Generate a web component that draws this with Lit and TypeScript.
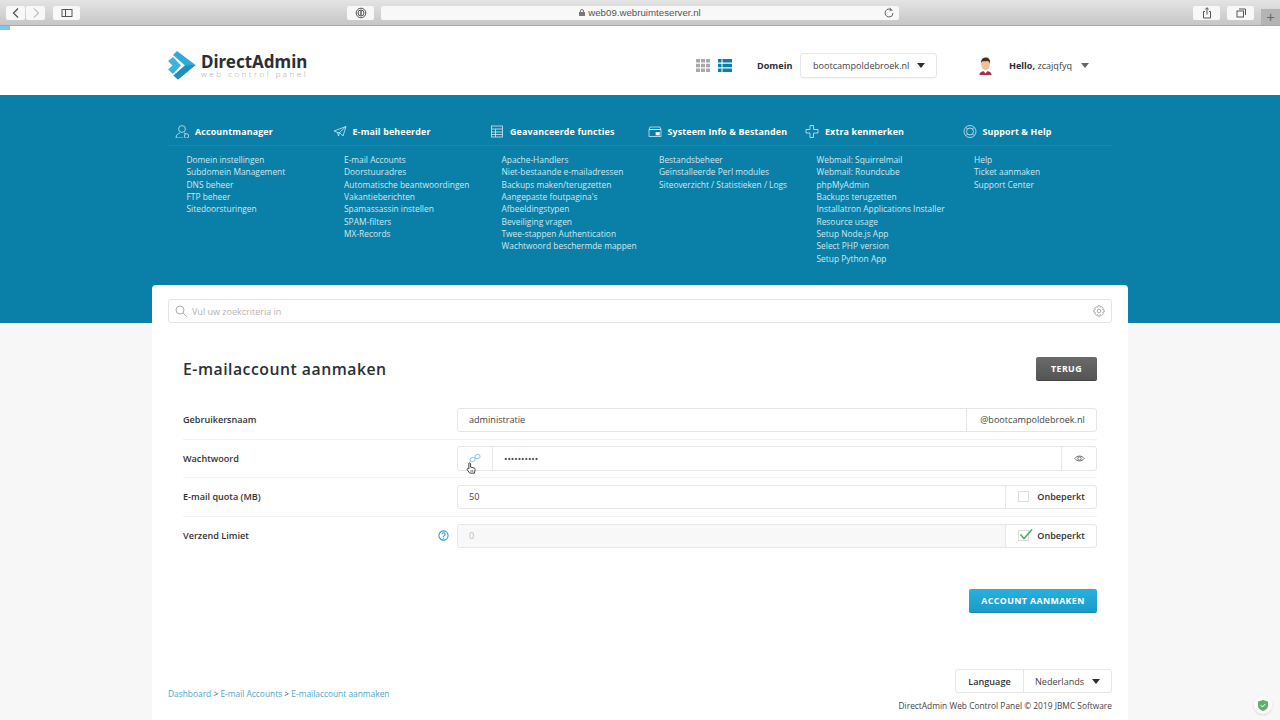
import { LitElement, html, css, svg } from "lit";
import { customElement } from "lit/decorators.js";

const menu = [
	{
		title: "Accountmanager",
		icon: svg`<circle cx="7" cy="5" r="3.4"/><path d="M1 14c0-3 2-4.600 4-5M9 9c1 .2 1.600.5 2 1M1 14h7"/><circle cx="11.500" cy="12" r="2.200"/>`,
		links: ["Domein instellingen", "Subdomein Management", "DNS beheer", "FTP beheer", "Sitedoorsturingen"],
	},
	{
		title: "E-mail beheerder",
		icon: svg`<path d="M1 7l12-4.500-3 9.500-3.500-3.500L13 2.500M6.500 8.500L5.500 12l-1-3.500zM1 7l3.500 1.500"/>`,
		links: ["E-mail Accounts", "Doorstuuradres", "Automatische beantwoordingen", "Vakantieberichten", "Spamassassin instellen", "SPAM-filters", "MX-Records"],
	},
	{
		title: "Geavanceerde functies",
		icon: svg`<rect x="1.500" y="2" width="11" height="11"/><path d="M1.500 5h11M1.500 8h11M1.500 10.500h11M5.500 5v8"/>`,
		links: ["Apache-Handlers", "Niet-bestaande e-mailadressen", "Backups maken/terugzetten", "Aangepaste foutpagina's", "Afbeeldingstypen", "Beveiliging vragen", "Twee-stappen Authentication", "Wachtwoord beschermde mappen"],
	},
	{
		title: "Systeem Info & Bestanden",
		icon: svg`<path d="M1 5.500V12.500h12V5.500zM2 3h10l1 2.500H1z"/><rect x="8" y="8.500" width="3.500" height="2.500" fill="currentColor"/>`,
		links: ["Bestandsbeheer", "Geïnstalleerde Perl modules", "Siteoverzicht / Statistieken / Logs"],
	},
	{
		title: "Extra kenmerken",
		icon: svg`<path d="M5 1.500h3.500V5.500H13v3.500H8.500v4.500H5V9H1V5.500h4z"/>`,
		links: ["Webmail: Squirrelmail", "Webmail: Roundcube", "phpMyAdmin", "Backups terugzetten", "Installatron Applications Installer", "Resource usage", "Setup Node.js App", "Select PHP version", "Setup Python App"],
	},
	{
		title: "Support & Help",
		icon: svg`<circle cx="7" cy="7.500" r="6"/><circle cx="7" cy="7.500" r="3.500"/><path d="M3 3.500l1.500 1.500M11 3.500L9.500 5M3 11.500L4.500 10M11 11.500L9.500 10"/>`,
		links: ["Help", "Ticket aanmaken", "Support Center"],
	},
];

@customElement("app-root")
export class AppRoot extends LitElement {
	static styles = css`
		:host {
			display: block;
			position: relative;
			width: 1280px;
			height: 720px;
			overflow: hidden;
			background: #f7f7f7;
			color: #333;
			font-family: "Open Sans", sans-serif;
			font-size: 9.1px;
		}

		/* browser chrome */
		.chrome {
			display: flex;
			align-items: center;
			height: 25px;
			box-sizing: content-box;
			background: linear-gradient(#e4e4e4, #c6c6c6);
			border-bottom: 1px solid #a8a8a8;
			padding-left: 6px;
		}

		.cbtn {
			display: flex;
			align-items: center;
			justify-content: center;
			height: 14px;
			width: 27px;
			background: #f8f8f8;
			border-radius: 2px;
			color: #555;
			flex: none;
		}

		.cbtn svg {
			width: 12px;
			height: 12px;
			fill: none;
			stroke: currentColor;
			stroke-width: 1;
		}

		.cbtn.half {
			width: 19px;
			margin-right: 1px;
		}

		.url {
			position: relative;
			display: flex;
			align-items: center;
			justify-content: center;
			gap: 3px;
			width: 518px;
			height: 14px;
			margin-left: 7px;
			background: #f8f8f8;
			border-radius: 2px;
			font-family: "Liberation Sans", sans-serif;
			font-size: 9.7px;
			color: #555;
		}

		.url .reload {
			position: absolute;
			right: 4px;
			top: 1px;
			width: 12px;
			height: 12px;
			fill: none;
			stroke: #666;
		}

		.plus {
			display: flex;
			align-items: center;
			justify-content: center;
			width: 19px;
			height: 16px;
			align-self: flex-end;
			margin-left: 7px;
			background: #b4b4b4;
			color: #666;
			font-size: 14px;
			font-family: "Liberation Sans", sans-serif;
		}

		.progress {
			height: 4px;
			width: 10px;
			background: #7cc8e6;
			margin-bottom: -4px;
			position: relative;
		}

		/* top header */
		.top {
			display: flex;
			align-items: center;
			height: 69px;
			box-sizing: border-box;
			padding: 10px 0 0 168px;
			background: #fff;
		}

		.logo {
			display: flex;
			align-items: center;
			gap: 5px;
			width: 528px;
		}

		.logo svg {
			width: 28px;
			height: 29px;
		}

		.logo b {
			display: block;
			font-size: 17px;
			line-height: 16px;
			font-weight: 700;
			color: #2b2f36;
			font-family: "Noto Sans", sans-serif;
		}

		.logo small {
			display: block;
			margin-top: -1px;
			font-size: 8px;
			line-height: 9px;
			letter-spacing: 2.5px;
			font-weight: 300;
			color: #a6a6a6;
			white-space: nowrap;
		}

		.views {
			display: flex;
			gap: 8px;
			width: 61px;
		}

		.views svg {
			width: 14px;
			height: 13px;
			display: block;
		}

		.strong {
			font-weight: 700;
			color: #2b2f36;
		}

		.domain {
			display: flex;
			align-items: center;
			justify-content: space-between;
			width: 137px;
			height: 25px;
			box-sizing: border-box;
			margin-left: 7.5px;
			padding: 0 11px 0 12px;
			border: 1px solid #e6e6e6;
			border-radius: 3px;
			color: #444;
			box-shadow: 0 1px 1px #0000000a;
		}

		.caret {
			width: 0;
			height: 0;
			border: 4.5px solid transparent;
			border-top: 5px solid #2b2f36;
			border-bottom: 0;
			flex: none;
		}

		.caret.grey {
			border-top-color: #666;
		}

		.avatar {
			width: 15px;
			height: 18px;
			margin-left: 41px;
		}

		.hello {
			margin-left: 16px;
			margin-right: 9px;
			color: #444;
		}

		/* blue band with menu */
		.band {
			height: 228px;
			box-sizing: border-box;
			padding: 26px 0 0 168px;
			background: #0a7fa7;
		}

		.nav {
			display: grid;
			grid-template-columns: repeat(6, 157.5px);
			width: 945px;
		}

		.nav h3 {
			display: flex;
			align-items: center;
			gap: 6px;
			height: 25px;
			box-sizing: border-box;
			margin: 0;
			padding: 0 0 4px 7px;
			font-size: 8.9px;
			font-weight: 700;
			letter-spacing: 0.15px;
			color: #fff;
			white-space: nowrap;
			border-bottom: 1px solid #ffffff12;
		}

		.nav h3 svg {
			width: 14px;
			height: 14px;
			flex: none;
			fill: none;
			stroke: #d4e9f1;
			stroke-width: 0.8;
		}

		.nav ul {
			list-style: none;
			margin: 0;
			padding: 8px 0 0 18.5px;
		}

		.nav li {
			height: 12.33px;
			line-height: 12.33px;
			font-size: 8.4px;
			color: #d2e8f0;
			white-space: nowrap;
		}

		/* main card */
		.card {
			width: 976px;
			height: 460px;
			box-sizing: border-box;
			margin: -38px 0 0 152px;
			padding: 14px 16px 0;
			background: #fff;
			border-radius: 4px 4px 0 0;
		}

		.search {
			display: flex;
			align-items: center;
			height: 24px;
			box-sizing: border-box;
			padding: 0 6px;
			background: #fff;
			border: 1px solid #e4e4e4;
			border-radius: 3px;
			color: #b4b4b4;
		}

		.search svg {
			width: 12px;
			height: 12px;
			fill: none;
			stroke: #999;
			stroke-width: 0.8;
			flex: none;
		}

		.search span {
			flex: 1;
			margin-left: 5px;
			font-size: 9px;
		}

		.form {
			padding: 34px 15px 0;
		}

		.form-head {
			display: flex;
			align-items: center;
			justify-content: space-between;
			height: 24px;
			margin-bottom: 20px;
		}

		h1 {
			margin: 0;
			font-size: 15.8px;
			font-weight: 600;
			letter-spacing: 0.5px;
			color: #2b2f36;
		}

		.btn {
			display: flex;
			align-items: center;
			justify-content: center;
			height: 24px;
			box-sizing: border-box;
			border-radius: 2px;
			font-size: 8.8px;
			font-weight: 700;
			letter-spacing: 0.4px;
			color: #fff;
		}

		.btn.back {
			width: 61px;
			background: linear-gradient(#6a6a6a, #555);
			border-bottom: 1px solid #444;
		}

		.btn.go {
			width: 128px;
			margin: 34px 0 0 auto;
			background: linear-gradient(#28b0dd, #1a9cc9);
			border-bottom: 1px solid #1589b2;
		}

		.row {
			display: flex;
			align-items: center;
			height: 38.5px;
			box-sizing: border-box;
			border-bottom: 1px solid #f2f2f2;
		}

		.row.last {
			border-bottom: none;
		}

		.row label {
			display: flex;
			align-items: center;
			justify-content: space-between;
			width: 266px;
			margin-right: 8px;
			font-weight: 600;
			color: #333;
			flex: none;
		}

		.row label svg {
			width: 11px;
			height: 11px;
			fill: none;
			stroke: #2a9fca;
			stroke-width: 1.2;
		}

		.group {
			display: flex;
			flex: 1;
			height: 24.5px;
			box-sizing: border-box;
			border: 1px solid #e6e6e6;
			border-radius: 3px;
		}

		.group > * {
			display: flex;
			align-items: center;
			box-sizing: border-box;
		}

		.group input {
			flex: 1;
			min-width: 0;
			padding: 0 11px;
			border: none;
			outline: none;
			background: none;
			font: inherit;
			color: #444;
		}

		.group input:disabled {
			background: #f8f8f8;
			color: #bbb;
		}

		.addon {
			justify-content: center;
			border-left: 1px solid #e6e6e6;
			color: #444;
			flex: none;
		}

		.addon.domainname {
			width: 130px;
			padding-left: 2px;
		}

		.addon.eye {
			width: 35px;
		}

		.addon.eye svg {
			width: 11px;
			height: 11px;
			fill: none;
			stroke: #666;
		}

		.addon.gen {
			position: relative;
			width: 35px;
			border-left: none;
			border-right: 1px solid #e6e6e6;
		}

		.addon.gen > svg {
			width: 12px;
			height: 12px;
			fill: none;
			stroke: #8fcbe2;
		}

		.pointer {
			position: absolute;
			left: 7px;
			top: 15px;
			width: 12px;
			height: 14px;
		}

		.addon.check {
			width: 91px;
			gap: 8px;
			padding-left: 1px;
			font-weight: 600;
			color: #333;
		}

		.box {
			position: relative;
			width: 11px;
			height: 11px;
			box-sizing: border-box;
			border: 1px solid #ddd;
			flex: none;
		}

		.box svg {
			position: absolute;
			left: 0;
			top: -3px;
			width: 14px;
			height: 13px;
			fill: none;
			stroke: #4caf6a;
			stroke-width: 1.6;
		}

		.foot {
			display: flex;
			justify-content: space-between;
			align-items: flex-end;
			margin-top: 56px;
		}

		.crumbs {
			margin-bottom: 13px;
			font-size: 8.4px;
			color: #555;
		}

		.crumbs a {
			color: #4fa6c4;
		}

		.foot-right {
			display: flex;
			flex-direction: column;
			align-items: flex-end;
		}

		.lang {
			display: flex;
			height: 24px;
			box-sizing: border-box;
			border: 1px solid #e6e6e6;
			border-radius: 3px;
		}

		.lang > div {
			display: flex;
			align-items: center;
		}

		.lang .l1 {
			justify-content: center;
			width: 67px;
			border-right: 1px solid #e6e6e6;
			font-weight: 600;
		}

		.lang .l2 {
			justify-content: space-between;
			width: 87px;
			padding: 0 11px;
			box-sizing: border-box;
			color: #444;
		}

		.copy {
			margin-top: 7px;
			font-size: 8.4px;
			line-height: 12px;
			color: #444;
		}

		.shield {
			position: absolute;
			left: 1254px;
			top: 696px;
			display: flex;
			align-items: center;
			justify-content: center;
			width: 18px;
			height: 18px;
			background: #fff;
			border-radius: 50%;
			box-shadow: 0 1px 3px #0002;
		}

		.shield svg {
			width: 10px;
			height: 11px;
		}
	`;

	private chrome() {
		return html`
			<div class="chrome">
				<div class="cbtn half"><svg viewBox="0 0 12 12"><path d="M8 1.500L3.500 6 8 10.500" stroke-width="1.300"/></svg></div>
				<div class="cbtn half" style="color:#999"><svg viewBox="0 0 12 12"><path d="M4 1.500L8.500 6 4 10.500"/></svg></div>
				<div class="cbtn" style="margin-left:7px"><svg viewBox="0 0 12 12"><rect x="1" y="2.500" width="10" height="7"/><path d="M4.500 2.500v7"/></svg></div>
				<div class="cbtn" style="margin-left:267px"><svg viewBox="0 0 12 12"><circle cx="6" cy="6" r="4.800"/><circle cx="6" cy="6" r="3"/><path d="M6 3.500v5" stroke-width="1.400"/></svg></div>
				<div class="url">
					<svg width="6" height="7" viewBox="0 0 6 7"><path d="M1.500 3V2a1.500 1.500 0 013 0v1" fill="none" stroke="#777"/><rect y="3" width="6" height="4" fill="#777"/></svg>
					web09.webruimteserver.nl
					<svg class="reload" viewBox="0 0 12 12"><path d="M9.500 4A4 4 0 106 10a4 4 0 004-4M6.500 1L8.500 2.500 6.500 4" /></svg>
				</div>
				<div class="cbtn" style="margin-left:294px"><svg viewBox="0 0 12 12"><path d="M4 4.500H2.500V11h7V4.500H8M6 7.500V.8M4.300 2.300L6 .8l1.700 1.500"/></svg></div>
				<div class="cbtn" style="margin-left:7px"><svg viewBox="0 0 12 12"><rect x="2" y="4" width="6.500" height="6"/><path d="M4 2h6.500v6"/></svg></div>
				<div class="plus">+</div>
			</div>
			<div class="progress"></div>
		`;
	}

	private top() {
		return html`
			<div class="top">
				<div class="logo">
					<svg viewBox="0 0 28 29">
						<path d="M9 0L27.500 14 10 28.500 5.500 24.500 17 14.500 5 4z" fill="#2fa9d8"/>
						<path d="M17 14.500L27.500 14 10 28.500 5.500 24.500z" fill="#1f8fbc"/>
						<path d="M0 10L5 6 13 14.500 5 23 0 18.500 4.500 14.500z" fill="#3db4e0"/>
					</svg>
					<div>
						<b>DirectAdmin</b>
						<small>web control panel</small>
					</div>
				</div>
				<div class="views">
					<svg viewBox="0 0 14 13" fill="#a9a9a9"><path d="M0 0h4v3.500H0zM5 0h4v3.500H5zM10 0h4v3.500h-4zM0 4.700h4v3.500H0zM5 4.700h4v3.500H5zM10 4.700h4v3.500h-4zM0 9.400h4V13H0zM5 9.400h4V13H5zM10 9.400h4V13h-4z"/></svg>
					<svg viewBox="0 0 14 13" fill="#0a7fa7"><path d="M0 0h3.500v3.500H0zM4.500 0H14v3.500H4.500zM0 4.700h3.500v3.500H0zM4.500 4.700H14v3.500H4.500zM0 9.400h3.500V13H0zM4.500 9.400H14V13H4.500z"/></svg>
				</div>
				<span class="strong">Domein</span>
				<div class="domain">bootcampoldebroek.nl <span class="caret"></span></div>
				<svg class="avatar" viewBox="0 0 15 18">
					<path d="M1.500 18c0-3 2.500-4 6-4s6 1 6 4z" fill="#a8324a"/>
					<path d="M5.500 14l2 2.500 2-2.500z" fill="#fff"/>
					<ellipse cx="7.500" cy="7.500" rx="4.300" ry="5.500" fill="#f0c09a"/>
					<path d="M3 7C2.500 2.500 5 .5 8 .5s4.500 2.500 4 6.500c-.5-2-1.500-3-2.500-3C8 4.500 5 4 4 4.500 3.400 5 3.200 6 3 7z" fill="#4a2f20"/>
				</svg>
				<div class="hello"><span class="strong">Hello,</span> zcajqfyq</div>
				<span class="caret grey"></span>
			</div>
		`;
	}

	private form() {
		return html`
			<div class="form">
				<div class="form-head">
					<h1>E-mailaccount aanmaken</h1>
					<div class="btn back">TERUG</div>
				</div>
				<div class="row">
					<label>Gebruikersnaam</label>
					<div class="group">
						<input .value=${"administratie"} />
						<div class="addon domainname">@bootcampoldebroek.nl</div>
					</div>
				</div>
				<div class="row">
					<label>Wachtwoord</label>
					<div class="group">
						<div class="addon gen">
							<svg viewBox="0 0 12 12"><rect x="1" y="5.500" width="5" height="4" rx="2" transform="rotate(-25 3.500 7.500)"/><rect x="6" y="2.500" width="5" height="4" rx="2" transform="rotate(-25 8.500 4.500)"/></svg>
							<svg class="pointer" viewBox="0 0 12 14"><path d="M3.500 8V2a1 1 0 012 0v4l4 1c1 .3 1.500 1 1.300 2l-.8 4H4.500L1.500 9c-.6-1 .8-2 2-1z" fill="#fff" stroke="#222"/><path d="M6 9.500v2M8 9.500v2" stroke="#222" stroke-width=".8"/></svg>
						</div>
						<input type="password" .value=${"abcdefghij"} />
						<div class="addon eye"><svg viewBox="0 0 12 12"><path d="M.8 6C3.500 2.500 8.500 2.500 11.200 6 8.500 9.500 3.500 9.500.8 6z"/><circle cx="6" cy="6" r="1.800"/></svg></div>
					</div>
				</div>
				<div class="row">
					<label>E-mail quota (MB)</label>
					<div class="group">
						<input .value=${"50"} />
						<div class="addon check"><span class="box"></span>Onbeperkt</div>
					</div>
				</div>
				<div class="row last">
					<label>Verzend Limiet
						<svg viewBox="0 0 12 12"><circle cx="6" cy="6" r="5"/><path d="M4.300 4.800a1.700 1.700 0 113 1c-.7.600-1.300.8-1.300 1.700M6 8.500v1"/></svg>
					</label>
					<div class="group">
						<input disabled .value=${"0"} />
						<div class="addon check"><span class="box"><svg viewBox="0 0 14 13"><path d="M1.500 6.500L5 10.500 13 1.500"/></svg></span>Onbeperkt</div>
					</div>
				</div>
				<div class="btn go">ACCOUNT AANMAKEN</div>
			</div>
		`;
	}

	render() {
		return html`
			${this.chrome()}
			${this.top()}
			<div class="band">
				<div class="nav">
					${menu.map((col) => html`
						<div>
							<h3><svg viewBox="0 0 14 14">${col.icon}</svg>${col.title}</h3>
							<ul>${col.links.map((l) => html`<li>${l}</li>`)}</ul>
						</div>
					`)}
				</div>
			</div>
			<div class="card">
				<div class="search">
					<svg viewBox="0 0 12 12"><circle cx="5" cy="5" r="4"/><path d="M8 8l3.500 3.500"/></svg>
					<span>Vul uw zoekcriteria in</span>
					<svg viewBox="0 0 12 12"><circle cx="6" cy="6" r="1.800"/><path d="M5 .8h2l.4 1.500 1.400-.6 1.500 1.500-.7 1.300 1.600.5v2l-1.600.5.700 1.300-1.500 1.500-1.400-.7-.4 1.600H5l-.4-1.600-1.400.7-1.500-1.500.7-1.300L.8 7V5l1.600-.5-.7-1.300 1.500-1.500 1.400.6z"/></svg>
				</div>
				${this.form()}
				<div class="foot">
					<div class="crumbs"><a>Dashboard</a> &gt; <a>E-mail Accounts</a> &gt; <a>E-mailaccount aanmaken</a></div>
					<div class="foot-right">
						<div class="lang">
							<div class="l1">Language</div>
							<div class="l2">Nederlands <span class="caret"></span></div>
						</div>
						<div class="copy">DirectAdmin Web Control Panel © 2019 JBMC Software</div>
					</div>
				</div>
			</div>
			<div class="shield">
				<svg viewBox="0 0 10 11"><path d="M5 0l5 1.500V6c0 2.500-2.500 4-5 5-2.500-1-5-2.500-5-5V1.500z" fill="#5fb06e"/><path d="M2.800 5.200L4.500 7l2.800-3" fill="none" stroke="#fff"/></svg>
			</div>
		`;
	}
}
